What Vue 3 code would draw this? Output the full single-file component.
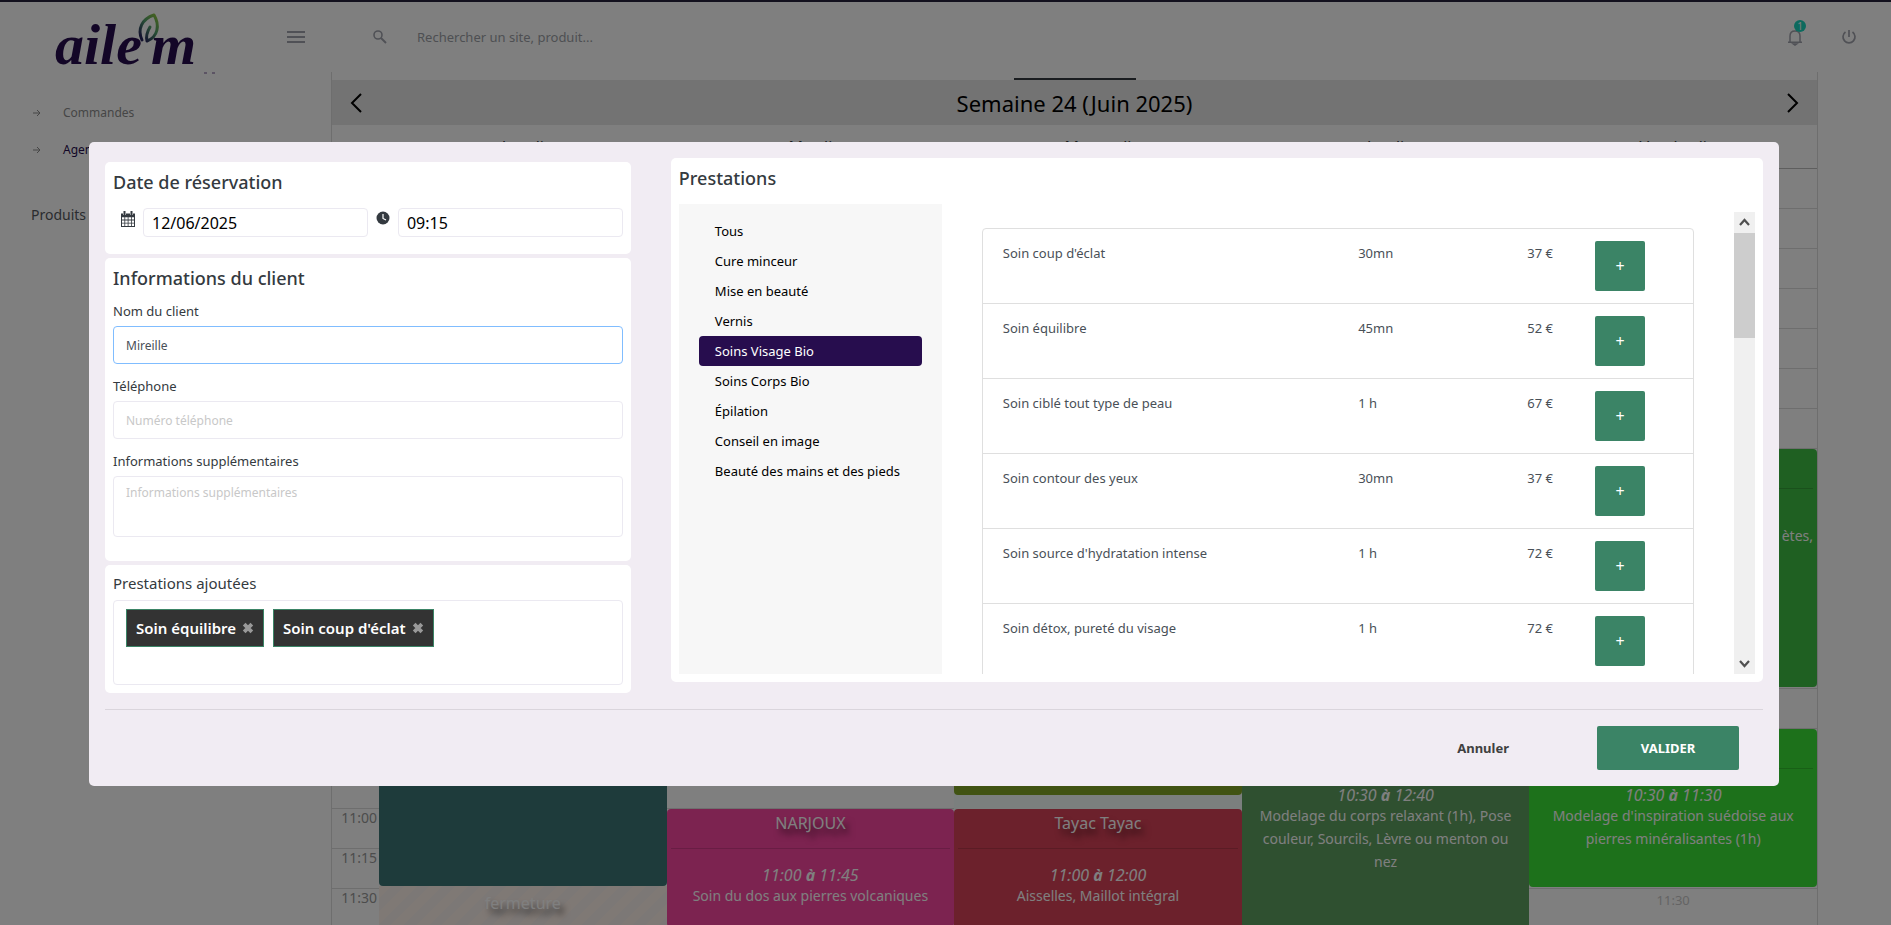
<script setup>
import { onMounted, ref } from 'vue'

const nameField = ref(null)
const clientName = ref('Mireille')
const phone = ref('')
const notes = ref('')
const date = ref('12/06/2025')
const time = ref('09:15')
const category = ref('Soins Visage Bio')

const categories = [
  'Tous',
  'Cure minceur',
  'Mise en beauté',
  'Vernis',
  'Soins Visage Bio',
  'Soins Corps Bio',
  'Épilation',
  'Conseil en image',
  'Beauté des mains et des pieds',
]

const services = [
  { name: "Soin coup d'éclat", duration: '30mn', price: '37 €' },
  { name: 'Soin équilibre', duration: '45mn', price: '52 €' },
  { name: 'Soin ciblé tout type de peau', duration: '1 h', price: '67 €' },
  { name: 'Soin contour des yeux', duration: '30mn', price: '37 €' },
  { name: "Soin source d'hydratation intense", duration: '1 h', price: '72 €' },
  { name: 'Soin détox, pureté du visage', duration: '1 h', price: '72 €' },
]

const added = ref(['Soin équilibre', "Soin coup d'éclat"])
const remove = (item) => {
  added.value = added.value.filter((name) => name !== item)
}
const add = (item) => {
  if (!added.value.includes(item)) added.value.push(item)
}

const days = ['Lundi', 'Mardi', 'Mercredi', 'Jeudi', 'Vendredi']

const hours = [
  { label: '11:00', row: 17 },
  { label: '11:15', row: 18 },
  { label: '11:30', row: 19 },
]

onMounted(() => nameField.value.focus({ preventScroll: true }))
</script>

<template>
  <div class="app">
    <header class="topbar">
      <a class="brand" href="#" aria-label="aile'm">
        <svg width="150" height="80" viewBox="0 -7 150 80">
          <defs>
            <linearGradient id="leaf" x1="1" y1="0" x2="0.3" y2="1">
              <stop offset="0" stop-color="#8ec63f" />
              <stop offset="0.5" stop-color="#4f9d6c" />
              <stop offset="1" stop-color="#27245c" />
            </linearGradient>
          </defs>
          <text class="wordmark" x="4" y="60">aile</text>
          <text class="wordmark" x="100" y="60">m</text>
          <path
            d="M91 36 C86 25 91 15 103 11 C109 21 107 33 96 37 C95 33 96 28 99 23"
            fill="none"
            stroke="url(#leaf)"
            stroke-width="3"
            stroke-linecap="round"
            stroke-linejoin="round"
          />
        </svg>
      </a>
      <button class="icon-button burger" type="button" aria-label="Menu">
        <svg width="18" height="12" viewBox="0 0 18 12">
          <path d="M0 1h18M0 6h18M0 11h18" fill="none" stroke="currentColor" stroke-width="2" />
        </svg>
      </button>
      <form class="search" @submit.prevent>
        <svg width="14" height="14" viewBox="0 0 14 14" fill="none" stroke="currentColor">
          <circle cx="5" cy="5" r="4" stroke-width="1.600" />
          <path d="M8 8l5 5" stroke-width="2" />
        </svg>
        <input type="search" aria-label="Rechercher" placeholder="Rechercher un site, produit..." />
      </form>
      <button class="icon-button bell" type="button" aria-label="Notifications">
        <svg width="16" height="18" viewBox="0 0 16 18" fill="none" stroke="currentColor" stroke-width="1.500">
          <path d="M1 14.200h14M3 14V8c0-3.200 2-5 5-5s5 1.800 5 5v6" />
          <path d="M6.500 16h3l-1.500 1z" fill="currentColor" />
        </svg>
        <span class="badge">1</span>
      </button>
      <button class="icon-button" type="button" aria-label="Déconnexion">
        <svg width="16" height="16" viewBox="0 0 16 16" fill="none" stroke="currentColor" stroke-width="1.700">
          <path d="M8 1v7M4.500 3A6 6 0 1 0 11.500 3" />
        </svg>
      </button>
    </header>

    <div class="main">
      <nav class="sidebar">
        <div class="heading-tail"><i></i><i></i></div>
        <a class="nav-link" href="#">
          <svg width="8" height="8" viewBox="0 0 8 8" fill="none" stroke="currentColor"><path d="M0 4h7M4 1l3 3-3 3" /></svg>
          Commandes
        </a>
        <a class="nav-link current" href="#">
          <svg width="8" height="8" viewBox="0 0 8 8" fill="none" stroke="currentColor"><path d="M0 4h7M4 1l3 3-3 3" /></svg>
          Agenda
        </a>
        <a class="nav-title" href="#">Produits</a>
      </nav>

      <section class="calendar">
        <div class="tabs"><span class="tab-indicator"></span></div>
        <div class="week">
          <button class="week-button" type="button" aria-label="Semaine précédente">
            <svg width="12" height="20" viewBox="0 0 12 20"><path d="M11 1L2 10l9 9" fill="none" stroke="currentColor" stroke-width="2" /></svg>
          </button>
          <h1>Semaine 24 (Juin 2025)</h1>
          <button class="week-button" type="button" aria-label="Semaine suivante">
            <svg width="12" height="20" viewBox="0 0 12 20"><path d="M1 1l9 9-9 9" fill="none" stroke="currentColor" stroke-width="2" /></svg>
          </button>
        </div>
        <div class="days">
          <span></span>
          <span v-for="day in days" :key="day">{{ day }}</span>
        </div>
        <div class="slots">
          <span v-for="hour in hours" :key="hour.label" class="hour" :style="{ gridRow: hour.row }">{{ hour.label }}</span>

          <article class="event teal"></article>
          <article class="event closed"><h2>fermeture</h2></article>
          <article class="event pink">
            <h2>NARJOUX</h2>
            <p><em>11:00 <b>à</b> 11:45</em>Soin du dos aux pierres volcaniques</p>
          </article>
          <div class="gap"></div>
          <article class="event olive"></article>
          <article class="event red">
            <h2>Tayac Tayac</h2>
            <p><em>11:00 <b>à</b> 12:00</em>Aisselles, Maillot intégral</p>
          </article>
          <article class="event forest">
            <h2></h2>
            <p><em>10:30 <b>à</b> 12:40</em>Modelage du corps relaxant (1h), Pose couleur, Sourcils, Lèvre ou menton ou nez</p>
          </article>
          <article class="event green">
            <h2></h2>
            <p class="tail">ètes,</p>
          </article>
          <article class="event lime">
            <h2></h2>
            <p><em>10:30 <b>à</b> 11:30</em>Modelage d'inspiration suédoise aux pierres minéralisantes (1h)</p>
          </article>
          <span class="free">11:30</span>
        </div>
      </section>
    </div>

    <div class="overlay">
      <div class="modal" role="dialog" aria-modal="true" aria-label="Réservation">
        <div class="columns">
          <div class="left">
            <section class="card date-card">
              <h3>Date de réservation</h3>
              <div class="when">
                <label for="date" aria-label="Date">
                  <svg width="14" height="16" viewBox="0 0 14 16">
                    <path fill="#343a40" fill-rule="evenodd" d="M0 2.500h14V16H0zM1 6.200v2.400h2.400V6.200zm3.200 0v2.400h2.500V6.200zm3.300 0v2.400H10V6.200zm3.300 0v2.400H13V6.200zM1 9.400v2.400h2.400V9.400zm3.200 0v2.400h2.500V9.400zm3.300 0v2.400H10V9.400zm3.300 0v2.400H13V9.400zM1 12.600V15h2.400v-2.400zm3.200 0V15h2.500v-2.400zm3.300 0V15H10v-2.400zm3.300 0V15H13v-2.400z" />
                    <path d="M3.500 .5v3.500M10.500 .5v3.500" stroke="#fff" stroke-width="3" />
                    <path d="M3.500 0v4M10.500 0v4" stroke="#343a40" stroke-width="2" />
                  </svg>
                </label>
                <input id="date" v-model="date" type="text" />
                <label for="time" aria-label="Heure">
                  <svg width="14" height="14" viewBox="0 0 14 14">
                    <circle cx="7" cy="7" r="6.500" fill="#343a40" />
                    <path d="M7 3v4.500l3 1.500" fill="none" stroke="#fff" stroke-width="1.200" />
                  </svg>
                </label>
                <input id="time" v-model="time" type="text" />
              </div>
            </section>

            <section class="card client-card">
              <h3>Informations du client</h3>
              <div class="field">
                <label for="client">Nom du client</label>
                <input id="client" ref="nameField" v-model="clientName" type="text" />
              </div>
              <div class="field">
                <label for="phone">Téléphone</label>
                <input id="phone" v-model="phone" type="tel" placeholder="Numéro téléphone" />
              </div>
              <div class="field">
                <label for="notes">Informations supplémentaires</label>
                <textarea id="notes" v-model="notes" placeholder="Informations supplémentaires"></textarea>
              </div>
            </section>

            <section class="card">
              <h4>Prestations ajoutées</h4>
              <div class="tags">
                <span v-for="item in added" :key="item" class="tag">
                  {{ item }}
                  <button type="button" :aria-label="'Retirer ' + item" @click="remove(item)">
                    <svg width="12" height="12" viewBox="0 0 11 11"><path d="M2 2l7 7M9 2l-7 7" stroke="currentColor" stroke-width="3.500" /></svg>
                  </button>
                </span>
              </div>
            </section>
          </div>

          <section class="card services">
            <h3>Prestations</h3>
            <div class="browser">
              <div class="categories">
                <button
                  v-for="item in categories"
                  :key="item"
                  type="button"
                  :class="{ active: item === category }"
                  @click="category = item"
                >
                  {{ item }}
                </button>
              </div>
              <div class="results">
                <ul>
                  <li v-for="service in services" :key="service.name">
                    <span>{{ service.name }}</span>
                    <span>{{ service.duration }}</span>
                    <span>{{ service.price }}</span>
                    <button type="button" :aria-label="'Ajouter ' + service.name" @click="add(service.name)">+</button>
                  </li>
                </ul>
                <div class="scrollbar" aria-hidden="true">
                  <svg width="21" height="21" viewBox="0 0 21 21"><path d="M6 13l4.500-5 4.500 5" fill="none" stroke="#505050" stroke-width="2.200" /></svg>
                  <div class="track"><div class="thumb"></div></div>
                  <svg width="21" height="21" viewBox="0 0 21 21"><path d="M6 8l4.500 5 4.500-5" fill="none" stroke="#505050" stroke-width="2.200" /></svg>
                </div>
              </div>
            </div>
          </section>
        </div>
        <footer>
          <button class="cancel" type="button">Annuler</button>
          <button class="submit" type="button">VALIDER</button>
        </footer>
      </div>
    </div>
  </div>
</template>

<style>
body {
  margin: 0;
  overflow: hidden;
}
</style>

<style scoped>
.app,
.app * {
  box-sizing: border-box;
}
.app {
  display: flex;
  flex-direction: column;
  height: 100vh;
  overflow: hidden;
  background: #fff;
  color: #343a40;
  font-family: "Noto Sans", "Open Sans", sans-serif;
  font-size: 13px;
  line-height: 20px;
}
button,
input,
textarea {
  font: inherit;
  color: inherit;
}
button {
  border: 0;
  padding: 0;
  background: none;
  cursor: pointer;
}
a {
  color: inherit;
  text-decoration: none;
}
h1,
h2,
h3,
h4,
p,
ul {
  margin: 0;
  padding: 0;
  font-weight: 400;
}
svg {
  display: block;
  flex: none;
}

/* Top bar */
.topbar {
  display: flex;
  align-items: center;
  flex: none;
  height: 72px;
  padding: 0 34px 0 51px;
  border-top: 2px solid #26223c;
}
.brand {
  width: 236px;
}
.brand svg {
  overflow: visible;
}
.wordmark {
  font-family: "Liberation Serif", serif;
  font-size: 58px;
  font-style: italic;
  font-weight: 700;
  fill: #270d4e;
}
.icon-button {
  position: relative;
  color: #a0a2ac;
}
.burger {
  width: 18px;
}
.search {
  display: flex;
  align-items: center;
  flex: 1;
  gap: 30px;
  margin-left: 68px;
  color: #a0a2ac;
}
.search input {
  width: 320px;
  border: 0;
  padding: 0;
  outline: 0;
  background: none;
  font-size: 13px;
}
.search input::placeholder {
  color: #9c9fa6;
}
.bell {
  margin-right: 38px;
}
.badge {
  position: absolute;
  top: -8px;
  right: -3px;
  width: 12px;
  height: 12px;
  border-radius: 6px;
  background: #1ad4bd;
  color: #fff;
  font-size: 10px;
  line-height: 12px;
  text-align: center;
}

/* Side navigation */
.main {
  display: flex;
  flex: 1;
  min-height: 0;
}
.sidebar {
  display: flex;
  flex-direction: column;
  flex: none;
  width: 331px;
  padding-left: 31px;
}
.heading-tail {
  display: flex;
  gap: 5px;
  height: 31px;
  margin-left: 173px;
}
.heading-tail i {
  width: 3px;
  height: 2px;
  background: #b8a8c8;
}
.nav-link {
  display: flex;
  align-items: center;
  gap: 22px;
  height: 20px;
  margin-bottom: 17px;
  padding-left: 2px;
  color: #8c8c8c;
  font-size: 12px;
}
.nav-link.current {
  color: #270d4e;
}
.nav-link.current svg {
  color: #8c8c8c;
}
.nav-title {
  margin-top: 28px;
  font-size: 14px;
  color: #55595e;
}

/* Calendar */
.calendar {
  flex: 1;
  margin-right: 73px;
  border-left: 1px solid #dcdcdc;
  border-right: 1px solid #dcdcdc;
}
.tabs {
  display: flex;
  align-items: flex-end;
  justify-content: center;
  height: 8px;
}
.tab-indicator {
  width: 122px;
  height: 2px;
  background: #343a40;
}
.week {
  display: flex;
  align-items: center;
  justify-content: space-between;
  height: 45px;
  padding: 0 18px;
  background: #e6e6e6;
  color: #000;
}
.week h1 {
  font-size: 22px;
  line-height: 28px;
}
.days,
.slots {
  display: grid;
  grid-template-columns: 47px repeat(5, 1fr);
}
.days {
  height: 43px;
  padding-top: 12px;
  text-align: center;
  font-size: 16px;
}
.slots {
  grid-template-rows: repeat(20, 40px);
  border-top: 1px solid #bcbcbc;
  background: repeating-linear-gradient(#fff 0 39px, #dcdcdc 39px 40px);
}
.hour {
  grid-column: 1;
  padding-right: 2px;
  color: #999;
  font-size: 14px;
  line-height: 18px;
  text-align: right;
}
.free {
  grid-column: 6;
  grid-row: 19;
  padding-top: 1px;
  color: #c8c8c8;
  text-align: center;
}
.event {
  display: flex;
  flex-direction: column;
  margin-bottom: 2px;
  border-radius: 4px;
  color: #fff;
  font-size: 14px;
  text-align: center;
}
.event h2 {
  height: 40px;
  margin: 0 4px;
  padding-top: 4px;
  border-bottom: 1px solid rgba(0, 0, 0, 0.15);
  font-size: 16px;
  text-shadow: 4px 6px 6px rgba(0, 0, 0, 0.6);
}
.event p {
  padding: 15px 8px 0;
  line-height: 23px;
}
.event em {
  display: block;
  height: 20px;
  font-size: 16px;
  font-style: italic;
}
.teal {
  grid-area: 9 / 2 / 19 / 3;
  margin-bottom: 3px;
  background: #3c7676;
}
.closed {
  grid-area: 19 / 2 / 21 / 3;
  margin-top: -3px;
  border-radius: 0;
  background: repeating-linear-gradient(135deg, #fff2ea 0 9px, #f9f0ec 9px 18px);
}
.closed h2 {
  padding-top: 7px;
  border: 0;
}
.pink {
  grid-area: 17 / 3 / 20 / 4;
  background: #f846a0;
}
.gap {
  grid-area: 16 / 4 / 17 / 5;
  background: #f6fffd;
}
.olive {
  grid-area: 13 / 4 / 17 / 5;
  margin-bottom: 14px;
  background: #82a626;
}
.red {
  grid-area: 17 / 4 / 21 / 5;
  background: #d84258;
}
.forest {
  grid-area: 15 / 5 / 21 / 6;
  background: #5ea060;
}
.green {
  grid-area: 8 / 6 / 14 / 7;
  background: #3ec044;
}
.lime {
  grid-area: 15 / 6 / 19 / 7;
  background: #3ae236;
}
.event .tail {
  padding: 35px 4px 0;
  text-align: right;
}

/* Booking dialog */
.overlay {
  position: fixed;
  inset: 0;
  padding: 142px 112px 0 89px;
  background: rgba(0, 0, 0, 0.5);
}
.modal {
  padding: 16px;
  border-radius: 5px;
  background: #f1ecf3;
}
.columns {
  display: grid;
  grid-template-columns: minmax(0, 13fr) minmax(0, 27fr);
  align-items: start;
  gap: 40px;
}
.left {
  display: flex;
  flex-direction: column;
  gap: 4px;
  padding-top: 4px;
}
.card {
  padding: 8px;
  border-radius: 5px;
  background: #fff;
}
.card h3 {
  font-size: 18px;
  font-weight: 500;
  line-height: 24px;
}
.card h4 {
  font-size: 15px;
  line-height: 20px;
}
.date-card {
  padding-bottom: 17px;
}
.when {
  display: flex;
  gap: 8px;
  margin-top: 14px;
}
.when label {
  padding-top: 3px;
}
.when label:first-child {
  margin-left: 8px;
}
.when input {
  flex: 1;
  min-width: 0;
  height: 29px;
  padding: 0 8px;
  color: #000;
  font-size: 16px;
}
.when input,
.field input,
.field textarea,
.tags {
  border: 1px solid #ebe9f1;
  border-radius: 4px;
  background: #fff;
}
.client-card {
  padding-bottom: 24px;
}
.client-card h3 {
  margin-bottom: 11px;
}
.field + .field {
  margin-top: 12px;
}
.field label {
  display: block;
  margin-bottom: 5px;
}
.field input,
.field textarea {
  display: block;
  width: 100%;
  height: 38px;
  padding: 0 12px;
  outline: 0;
  color: #495057;
  font-size: 12px;
}
.field textarea {
  height: 61px;
  padding-top: 6px;
  resize: none;
}
.field input:focus,
.field textarea:focus {
  border-color: #80bdff;
}
.field ::placeholder {
  color: #c8c8c8;
}
.tags {
  display: flex;
  align-items: flex-start;
  gap: 9px;
  height: 85px;
  margin-top: 7px;
  padding: 8px 12px;
}
.tag {
  display: flex;
  align-items: center;
  gap: 6px;
  height: 38px;
  padding: 0 9px;
  border: 1px solid #3b8466;
  background: #333;
  color: #fff;
  font-size: 15px;
  font-weight: 600;
}
.tag button {
  color: #999;
}

/* Services browser */
.browser {
  display: flex;
  height: 470px;
  margin-top: 14px;
}
.categories {
  flex: none;
  width: 263px;
  padding: 12px 20px;
  background: #f7f7f7;
}
.categories button {
  display: block;
  width: 100%;
  height: 30px;
  padding: 0 16px;
  border-radius: 4px;
  color: #000;
  text-align: left;
  white-space: nowrap;
}
.categories .active {
  background: #270d4e;
  color: #fff;
}
.results {
  display: flex;
  flex: 1;
  gap: 40px;
  margin-top: 8px;
  padding-left: 40px;
  overflow: hidden;
}
.results ul {
  flex: 1;
  height: 600px;
  margin-top: 16px;
  border: 1px solid #dfdfdf;
  border-radius: 4px;
  list-style: none;
}
.results li {
  display: grid;
  grid-template-columns: 21fr 10fr 4fr 50px;
  height: 75px;
  padding: 12px 48px 12px 20px;
  border-bottom: 1px solid #dfdfdf;
  color: #495057;
}
.results li span {
  padding-top: 2px;
  white-space: nowrap;
}
.results li button {
  height: 50px;
  border-radius: 2px;
  background: #3b8466;
  color: #fff;
  font-size: 16px;
}
.scrollbar {
  display: flex;
  flex-direction: column;
  background: #f0f0f0;
}
.track {
  flex: 1;
}
.thumb {
  height: 25%;
  background: #cdcdcd;
}

/* Dialog actions */
footer {
  display: flex;
  justify-content: flex-end;
  gap: 64px;
  margin-top: 16px;
  padding: 16px 24px 0 0;
  border-top: 1px solid #dad5dc;
  font-weight: 700;
}
.cancel {
  padding: 0 24px;
  color: #404040;
}
.submit {
  width: 142px;
  height: 44px;
  border-radius: 2px;
  background: #3b8466;
  color: #fff;
}
</style>
